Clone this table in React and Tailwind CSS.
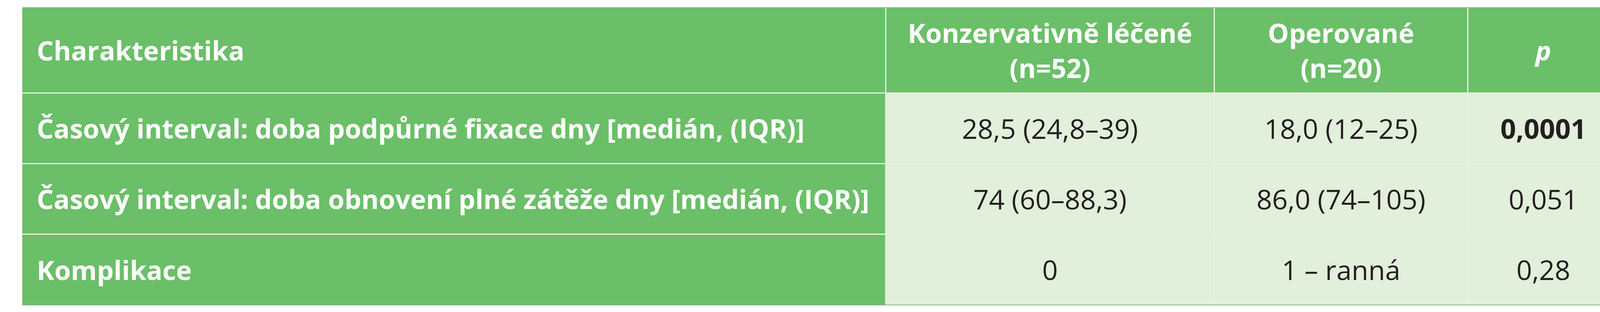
import React from "react";

const FONT = "font-['Open_Sans','Liberation_Sans',sans-serif]";

const rows = [
  {
    label: "Časový interval: doba podpůrné fixace dny [medián, (IQR)]",
    a: "28,5 (24,8–39)",
    b: "18,0 (12–25)",
    p: "0,0001",
    bold: true,
  },
  {
    label: "Časový interval: doba obnovení plné zátěže dny [medián, (IQR)]",
    a: "74 (60–88,3)",
    b: "86,0 (74–105)",
    p: "0,051",
  },
  { label: "Komplikace", a: "0", b: "1 – ranná", p: "0,28" },
];

const HEAD = "bg-[#6bbf68] flex items-center text-white font-bold text-[68px]";
const CELL = "bg-[#e2efda] flex items-center justify-center text-[#231f20] text-[70px]";

export default function App() {
  return (
    <div className={`bg-white w-[4197px] h-[800px] pt-[18px] pl-[57px] ${FONT}`}>
      <div className="w-[4086px] grid grid-cols-[2209px_838px_646px_384px] grid-rows-[217px_178px_178px_179px] gap-[3px] bg-[#e6f4de] border-t-2 border-b-2 border-t-[#a5c79e] border-b-[#8aae84]">
        <div className={`${HEAD} pl-[37px]`}>Charakteristika</div>
        <div className={`${HEAD} justify-center text-center leading-[90px]`}>
          <span>Konzervativně léčené<br />(n=52)</span>
        </div>
        <div className={`${HEAD} justify-center text-center leading-[90px]`}>
          <span>Operované<br />(n=20)</span>
        </div>
        <div className={`${HEAD} justify-center italic`}>p</div>

        {rows.map((r, i) => (
          <React.Fragment key={i}>
            <div className={`${HEAD} pl-[37px] whitespace-nowrap`}>{r.label}</div>
            <div className={CELL}>{r.a}</div>
            <div className={CELL}>{r.b}</div>
            <div className={`${CELL} ${r.bold ? "font-bold" : ""}`}>{r.p}</div>
          </React.Fragment>
        ))}
      </div>
    </div>
  );
}
